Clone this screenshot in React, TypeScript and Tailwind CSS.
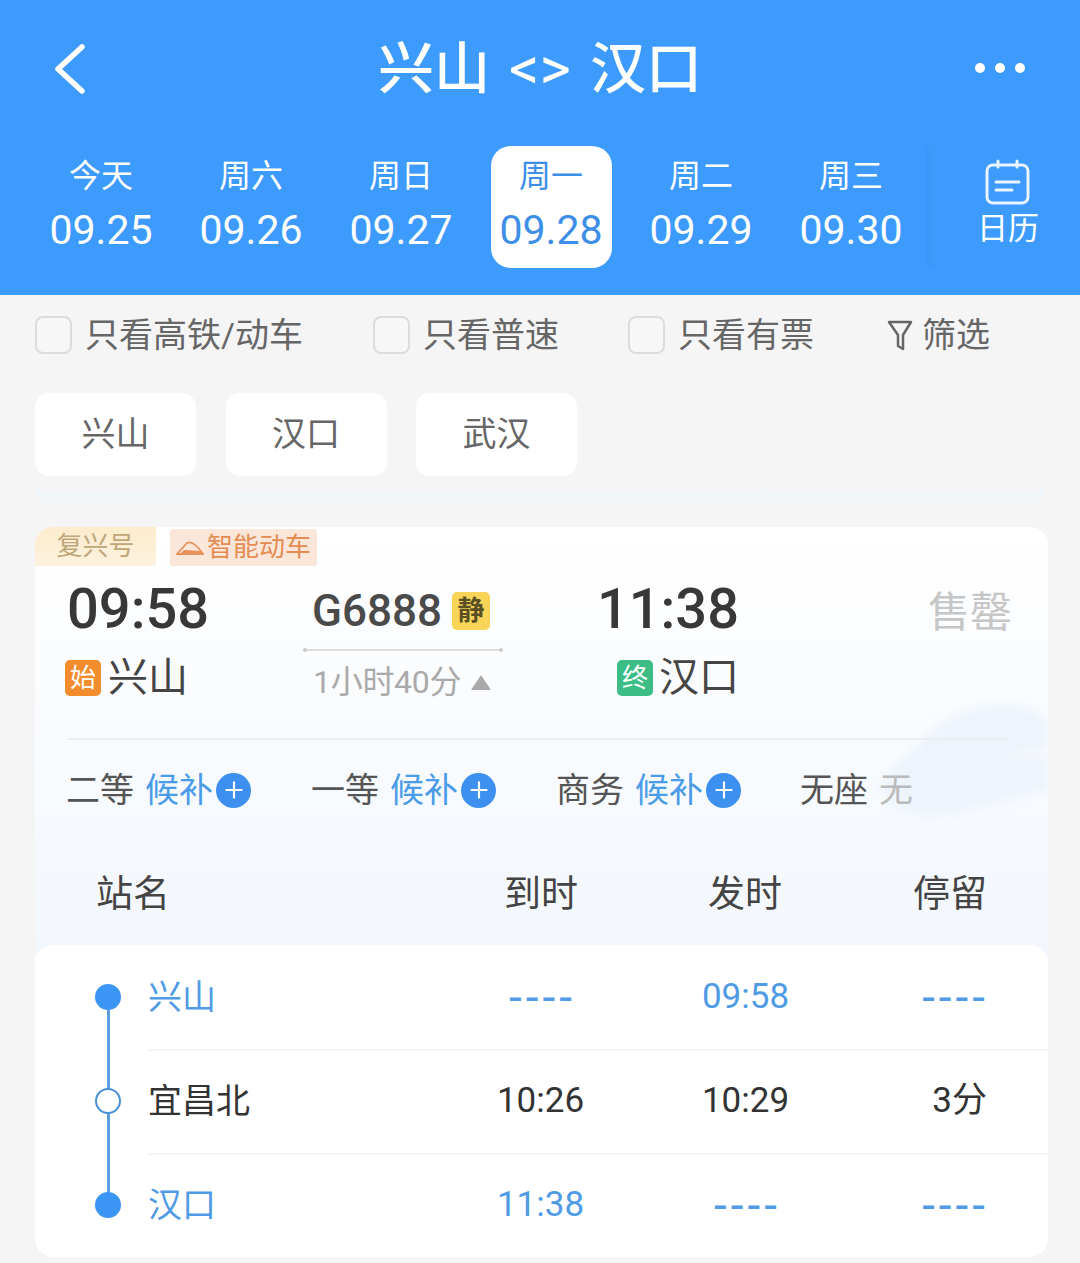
import React from "react";
import { Plus } from "lucide-react";

const cjk = "font-['Roboto','Noto_Sans_CJK_SC',sans-serif]";

const dates = [
  { label: "今天", date: "09.25" },
  { label: "周六", date: "09.26" },
  { label: "周日", date: "09.27" },
  { label: "周一", date: "09.28", active: true },
  { label: "周二", date: "09.29" },
  { label: "周三", date: "09.30" },
];

const filters = [
  { label: "只看高铁/动车", className: "w-[338px]" },
  { label: "只看普速", className: "w-[255px]" },
  { label: "只看有票", className: "w-[259px]" },
];

const seats = [
  { name: "二等", status: "候补", plus: true },
  { name: "一等", status: "候补", plus: true },
  { name: "商务", status: "候补", plus: true },
  { name: "无座", status: "无", plus: false },
];

const stops = [
  { name: "兴山", arrive: "----", depart: "09:58", stay: "----", main: true },
  { name: "宜昌北", arrive: "10:26", depart: "10:29", stay: "3分", main: false },
  { name: "汉口", arrive: "11:38", depart: "----", stay: "----", main: true },
];

const CalendarIcon = () => (
  <svg width="46" height="46" viewBox="0 0 46 46" fill="none" stroke="#eaf4ff" strokeWidth="3" strokeLinecap="round">
    <rect x="2" y="6" width="41" height="38" rx="6" />
    <path d="M13 2v6M32 2v6M11 23h23M11 31h16" />
  </svg>
);

const BackIcon = () => (
  <svg width="34" height="50" viewBox="0 0 34 50" fill="none" stroke="white" strokeWidth="5.5" strokeLinecap="round" strokeLinejoin="round">
    <path d="M29 3L5 25l24 22" />
  </svg>
);

const FilterIcon = () => (
  <svg width="26" height="32" viewBox="0 0 26 32" fill="none" stroke="#666666" strokeWidth="2.5" strokeLinejoin="round">
    <path d="M2 3h22l-8 13v14l-5-3V16z" />
  </svg>
);

const TrainIcon = () => (
  <svg width="28" height="16" viewBox="0 0 28 16" fill="none" stroke="#e8925a" strokeWidth="1.8">
    <path d="M1 14L11 3c4-2 9 1 16 11z" />
    <path d="M8 10l17 1 2 3H4z" fill="#e8925a" stroke="none" />
  </svg>
);

const Wave = () => (
  <svg className="absolute right-0 top-[170px] blur-[5px]" width="170" height="130" viewBox="0 0 170 130">
    <path
      d="M7 80C25 62 40 48 52 36 70 18 100 8 125 8c20 0 35 6 45 16v68c-40 8-80 26-120 26C25 118-5 100 7 80z"
      fill="#edf4fc"
    />
    <path d="M125 58c15-4 30-6 45-6v10c-15 0-30 0-45-4z" fill="#f6f9fd" />
  </svg>
);

export default function App() {
  return (
    <div className={`${cjk} h-[1263px] w-[1080px] overflow-hidden bg-[#f5f5f6]`}>
      {/* Blue header */}
      <div className="h-[295px] bg-[#3d9bfd] text-white">
        <div className="relative h-[146px] pt-[31px]">
          <div className="flex h-[76px] items-center justify-center text-[56px] font-medium leading-none">
            <span>兴山</span>
            <span className="mx-[19px] text-[60px] font-normal">{"<>"}</span>
            <span>汉口</span>
          </div>
          <div className="absolute left-[53px] top-[44px]">
            <BackIcon />
          </div>
          <div className="absolute right-[55px] top-[63px] flex gap-[10px]">
            <span className="h-[10px] w-[10px] rounded-full bg-white" />
            <span className="h-[10px] w-[10px] rounded-full bg-white" />
            <span className="h-[10px] w-[10px] rounded-full bg-white" />
          </div>
        </div>
        <div className="flex pl-[26px]">
          {dates.map((d) => (
            <div key={d.date} className="flex h-[122px] w-[150px] justify-center">
              <div
                className={`flex h-[122px] w-[121px] flex-col items-center rounded-[20px] pt-[9px] ${
                  d.active ? "bg-white text-[#3d8ee6]" : ""
                }`}
              >
                <span className="text-[32px] leading-[42px]">{d.label}</span>
                <span className="mt-[9px] text-[41px] leading-[48px]">{d.date}</span>
              </div>
            </div>
          ))}
          <div className="flex h-[122px] w-[154px] flex-col items-center bg-gradient-to-r from-[#3b98f9] to-[#3d9bfd] to-[8%] pl-[10px] pt-[13px]">
            <CalendarIcon />
            <span className="mt-[4px] text-[31px] leading-[40px]">日历</span>
          </div>
        </div>
      </div>

      {/* Filters */}
      <div className="flex h-[80px] items-center pb-[1px] pl-[35px] text-[34px] leading-none text-[#666666]">
        {filters.map((f) => (
          <div key={f.label} className={`flex items-center gap-[13px] ${f.className}`}>
            <span className="h-[38px] w-[37px] rounded-[8px] border-2 border-[#dcdcdc] bg-[#f7f7f7]" />
            <span>{f.label}</span>
          </div>
        ))}
        <div className="flex items-center gap-[9px]">
          <FilterIcon />
          <span>筛选</span>
        </div>
      </div>

      {/* Station chips */}
      <div className="mt-[18px] flex gap-[29.5px] pl-[35px]">
        {["兴山", "汉口", "武汉"].map((s) => (
          <div
            key={s}
            className="flex h-[83px] w-[161px] items-center justify-center rounded-[14px] bg-white text-[34px] text-[#666666]"
          >
            {s}
          </div>
        ))}
      </div>

      <div className="mx-[35px] mt-[14px] h-[15px] rounded-b-[14px] bg-gradient-to-b from-[#f0f6fc] to-[#f4f7f9]" />

      {/* Train card */}
      <div className="relative ml-[35px] mr-[32px] mt-[22px] h-[730px] overflow-hidden rounded-[18px]">
        <div className="relative h-[436px] bg-gradient-to-b from-white to-[#f2f7fd]">
          <Wave />
          <div className="relative flex h-[39px] items-start">
            <div className="flex h-[39px] w-[121px] items-center justify-center rounded-br-[4px] bg-gradient-to-b from-[#fdeccd] to-[#fdf2df] text-[26px] text-[#bfa678]">
              复兴号
            </div>
            <div className="ml-[14px] mt-[2px] flex h-[37px] w-[147px] items-center gap-[3px] rounded-[3px] bg-[#fbe6da] pl-[6px] text-[26px] text-[#e48c52]">
              <TrainIcon />
              <span>智能动车</span>
            </div>
          </div>

          <div className="relative flex h-[172px] pl-[32px] pt-[11px]">
            <div className="w-[236px]">
              <div className="text-[56px] font-medium leading-[64px] text-[#383838]">09:58</div>
              <div className="mt-[15px] flex h-[44px] items-center gap-[7px]">
                <span className="ml-[-2px] flex h-[36px] w-[36px] items-center justify-center rounded-[5px] bg-[#f28c2c] text-[26px] text-white">
                  始
                </span>
                <span className="text-[40px] leading-none text-[#444444]">兴山</span>
              </div>
            </div>
            <div className="w-[296px]">
              <div className="flex h-[60px] items-center pl-[9px] pt-[8px]">
                <span className="text-[44px] font-medium leading-none text-[#4a4a4a]">G6888</span>
                <span className="ml-[10px] flex h-[38px] w-[38px] items-center justify-center rounded-[5px] bg-[#f8d558] text-[27px] font-bold text-[#5a5024]">
                  静
                </span>
              </div>
              <div className="relative mt-[12px] h-[2px] w-[200px] bg-[#dddddd]">
                <span className="absolute left-0 top-[-1px] h-[4px] w-[4px] rounded-full bg-[#cccccc]" />
                <span className="absolute right-0 top-[-1px] h-[4px] w-[4px] rounded-full bg-[#cccccc]" />
              </div>
              <div className="mt-[9px] flex items-center pl-[10px] text-[32px] leading-[44px] text-[#aaaaaa]">
                <span className="tracking-[-0.3px]">1小时40分</span>
                <span className="ml-[10px] h-0 w-0 border-x-[10px] border-b-[15px] border-x-transparent border-b-[#aaaaaa]" />
              </div>
            </div>
            <div className="flex w-[140px] flex-col items-end">
              <div className="text-[56px] font-medium leading-[64px] text-[#383838]">11:38</div>
              <div className="mt-[15px] flex h-[44px] items-center gap-[6px]">
                <span className="flex h-[36px] w-[36px] items-center justify-center rounded-[5px] bg-[#3bbd85] text-[26px] text-white">
                  终
                </span>
                <span className="text-[40px] leading-none text-[#444444]">汉口</span>
              </div>
            </div>
            <div className="ml-[189px] pt-[6px] text-[42px] leading-[60px] text-[#c6c6c6]">售罄</div>
          </div>

          <div className="relative mx-[32px] h-[2px] w-[943px] bg-[#ebeff3]" />

          <div className="relative grid h-[100px] grid-cols-[245px_245px_244px_1fr] items-center pl-[31px] text-[34px] leading-none">
            {seats.map((s) => (
              <div key={s.name} className="flex items-center">
                <span className="text-[#555555]">{s.name}</span>
                <span className={`ml-[11px] ${s.plus ? "text-[#4a9be8]" : "text-[#bbbbbb]"}`}>{s.status}</span>
                {s.plus && (
                  <span className="ml-[3px] flex h-[35px] w-[35px] items-center justify-center rounded-full bg-[#3d8ff0]">
                    <Plus className="h-[26px] w-[26px] text-white" strokeWidth={2} />
                  </span>
                )}
              </div>
            ))}
          </div>

          <div className="relative grid h-[100px] grid-cols-[408px_204px_205px_1fr] pl-[61px] pt-[30px] text-[37px] leading-[50px] text-[#444444]">
            <span>站名</span>
            <span>到时</span>
            <span>发时</span>
            <span>停留</span>
          </div>
        </div>

        {/* Stops */}
        <div className="relative mt-[-18px] h-[312px] rounded-[18px] bg-white">
          <div className="absolute bottom-[52px] left-[72px] top-[52px] w-[3px] bg-[#5b9fe0]" />
          {stops.map((s, i) => (
            <div key={s.name} className="relative flex h-[104px] items-center">
              {s.main ? (
                <span className="absolute left-[60px] h-[26px] w-[26px] rounded-full bg-[#3d95f5]" />
              ) : (
                <span className="absolute left-[60px] h-[26px] w-[26px] rounded-full border-[2px] border-[#4a90d9] bg-white" />
              )}
              <div
                className={`ml-[113px] grid h-full flex-1 grid-cols-[290px_205px_205px_200px] items-center text-[35px] ${
                  i > 0 ? "border-t-2 border-[#f5f5f5] pb-[2px]" : ""
                } ${s.main ? "text-[#4f9be5]" : "text-[#333333]"}`}
              >
                <span className="text-[34px] leading-none">{s.name}</span>
                <Cell value={s.arrive} className="text-center" />
                <Cell value={s.depart} className="text-center" />
                <Cell value={s.stay} className="pr-[61px] text-right" />
              </div>
            </div>
          ))}
        </div>
      </div>
    </div>
  );
}

// the dashes in the table are longer and wider apart than plain hyphens
function Cell({ value, className }: { value: string; className: string }) {
  if (value === "----") {
    return <span className={`${className} translate-x-[2px] text-[46px] leading-none tracking-[4px]`}>{value}</span>;
  }
  return <span className={`${className} pt-[1px]`}>{value}</span>;
}
